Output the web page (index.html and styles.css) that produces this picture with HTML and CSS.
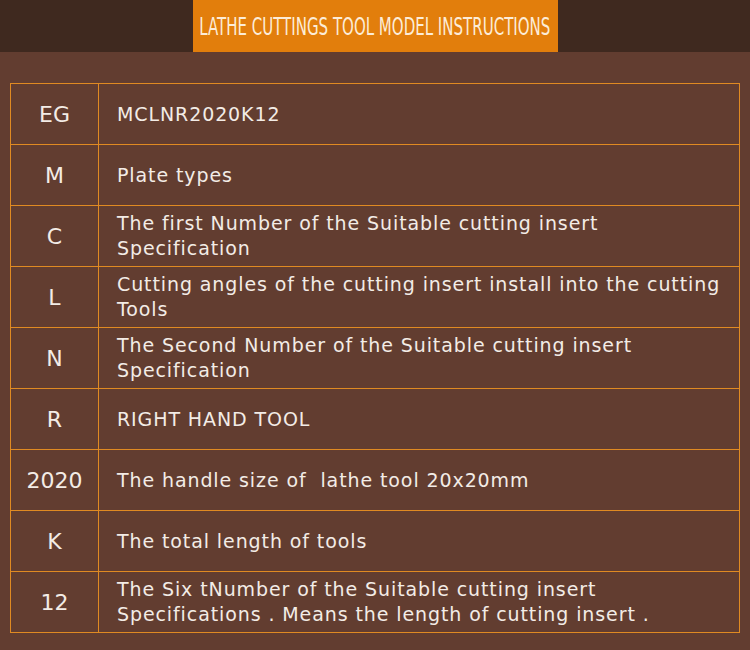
FILE: index.html
```html
<!DOCTYPE html>
<html lang="en">
<head>
<meta charset="utf-8">
<title>Lathe Cuttings Tool Model Instructions</title>
<link rel="stylesheet" href="styles.css">
</head>
<body>
<header class="band">
  <div class="title-box"><span class="title">LATHE CUTTINGS TOOL MODEL INSTRUCTIONS</span></div>
</header>
<main class="table">
  <div class="key">EG</div><div class="desc">MCLNR2020K12</div>
  <div class="key">M</div><div class="desc">Plate types</div>
  <div class="key">C</div><div class="desc">The first Number of the Suitable cutting insert<br>Specification</div>
  <div class="key">L</div><div class="desc">Cutting angles of the cutting insert install into the cutting<br>Tools</div>
  <div class="key">N</div><div class="desc">The Second Number of the Suitable cutting insert<br>Specification</div>
  <div class="key">R</div><div class="desc">RIGHT HAND TOOL</div>
  <div class="key">2020</div><div class="desc">The handle size of&nbsp; lathe tool 20x20mm</div>
  <div class="key">K</div><div class="desc">The total length of tools</div>
  <div class="key">12</div><div class="desc">The Six tNumber of the Suitable cutting insert<br>Specifications . Means the length of cutting insert .</div>
</main>
</body>
</html>
```

FILE: styles.css
```css
html, body {
  margin: 0;
  padding: 0;
}
body {
  background: #623d30;
  width: 750px;
  height: 650px;
  overflow: hidden;
  font-family: "DejaVu Sans", "Liberation Sans", sans-serif;
  color: #f3ece6;
}
.band {
  background: #3f291f;
  height: 52px;
  display: flex;
  justify-content: center;
}
.title-box {
  background: #e27e0c;
  width: 365px;
  height: 52px;
  display: flex;
  align-items: center;
  justify-content: center;
  overflow: hidden;
}
.title {
  display: inline-block;
  font-family: "DejaVu Sans Condensed", "DejaVu Sans", sans-serif;
  font-stretch: condensed;
  font-weight: 300;
  font-size: 25px;
  color: #fcecd8;
  white-space: nowrap;
  transform: scaleX(0.668);
  margin-top: 1px;
}
.table {
  margin: 31px 0 0 10px;
  width: 730px;
  display: grid;
  grid-template-columns: 88px 1fr;
  grid-auto-rows: 61px;
  border-top: 1px solid #e08a22;
  border-left: 1px solid #e08a22;
  box-sizing: border-box;
}
.key, .desc {
  border-right: 1px solid #e08a22;
  border-bottom: 1px solid #e08a22;
  display: flex;
  align-items: center;
}
.key {
  justify-content: center;
  font-size: 22px;
}
.desc {
  padding-left: 18px;
  font-size: 19px;
  letter-spacing: 0.9px;
  line-height: 25px;
}
```
